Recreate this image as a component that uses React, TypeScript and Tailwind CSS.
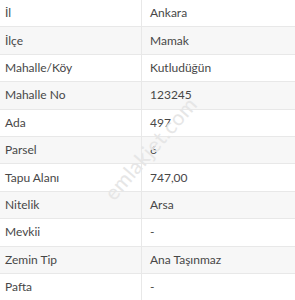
const rows: [string, string][] = [
  ['İl', 'Ankara'],
  ['İlçe', 'Mamak'],
  ['Mahalle/Köy', 'Kutludüğün'],
  ['Mahalle No', '123245'],
  ['Ada', '497'],
  ['Parsel', '6'],
  ['Tapu Alanı', '747,00'],
  ['Nitelik', 'Arsa'],
  ['Mevkii', '-'],
  ['Zemin Tip', 'Ana Taşınmaz'],
  ['Pafta', '-'],
]

export default function App() {
  return (
    <div
      className="relative w-[295px] h-[300px] overflow-hidden bg-white text-[12px] text-[#474747]"
      style={{ fontFamily: 'Lato, "Noto Sans", sans-serif' }}
    >
      {rows.map(([label, value], i) => (
        <div
          key={label}
          className={`flex h-[27.4px] items-center border-b border-[#e8e8e8] ${
            i % 2 === 1 ? 'bg-[#f7f7f7]' : 'bg-white'
          }`}
        >
          <div className="w-[142px] h-full flex items-center pl-[5px] border-r border-[#e8e8e8]">{label}</div>
          <div className="flex-1 pl-[8px]">{value}</div>
        </div>
      ))}

      {/* watermark */}
      <div className="pointer-events-none absolute left-[150px] top-[148px] -translate-x-1/2 -translate-y-1/2 -rotate-[49deg] text-[21px] text-[#e6e6e6] tracking-wide whitespace-nowrap">
        emlakjet.com
      </div>
    </div>
  )
}
